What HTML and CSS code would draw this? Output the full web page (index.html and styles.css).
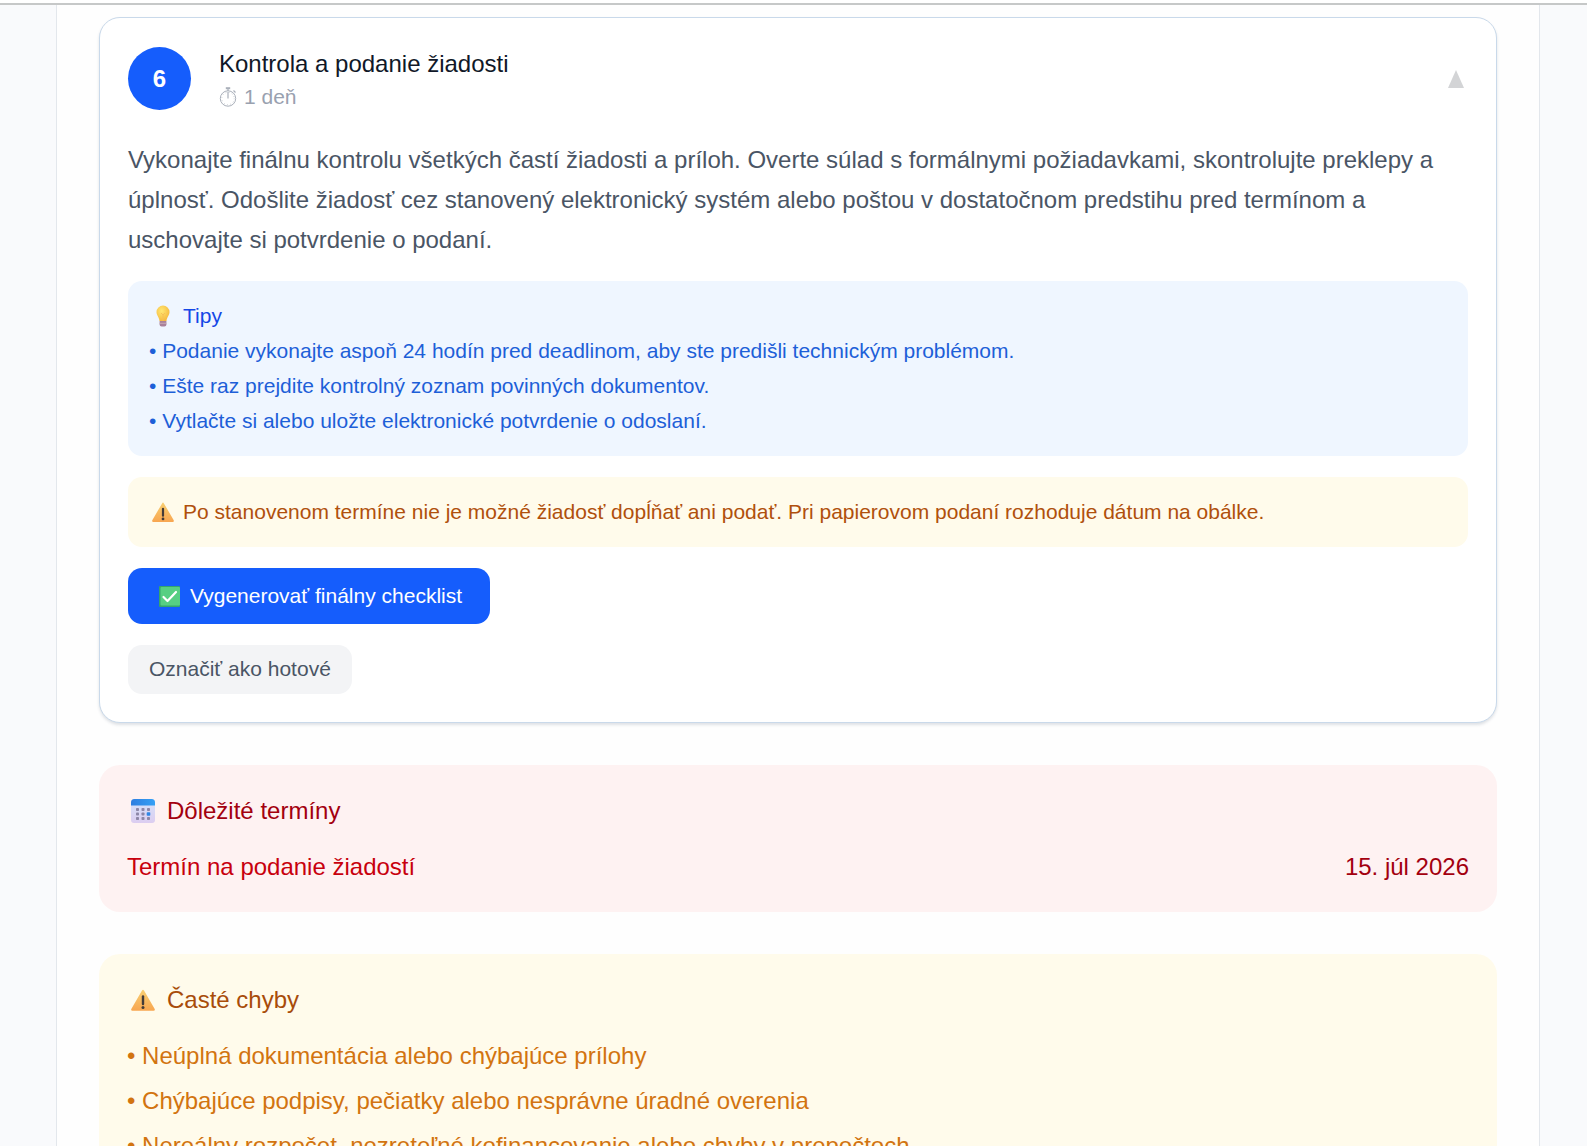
FILE: index.html
```html
<!DOCTYPE html>
<html lang="sk">
<head>
<meta charset="utf-8">
<meta name="viewport" content="width=device-width, initial-scale=1">
<title>Kontrola a podanie žiadosti</title>
<link rel="stylesheet" href="styles.css">
</head>
<body>
<svg class="defs" aria-hidden="true">
  <defs>
    <linearGradient id="amber" x1="0" y1="0" x2="0" y2="1"><stop offset="0" stop-color="#f8cf72"/><stop offset="1" stop-color="#f8a650"/></linearGradient>
    <radialGradient id="glow" cx=".4" cy=".35" r=".7"><stop offset="0" stop-color="#ffe873"/><stop offset="1" stop-color="#f5b63c"/></radialGradient>
    <linearGradient id="sky" x1="0" y1="0" x2="1" y2="0"><stop offset="0" stop-color="#2f7ee0"/><stop offset="1" stop-color="#35a0f5"/></linearGradient>
    <linearGradient id="paper" x1="0" y1="0" x2="0" y2="1"><stop offset="0" stop-color="#d5e4fb"/><stop offset="1" stop-color="#dccdf0"/></linearGradient>
    <symbol id="warning" viewBox="0 0 24 24">
      <path d="M11 2.6Q12 .8 13 2.600L23.700 21Q24.300 22.800 22.600 22.800H1.400Q-.3 22.800.3 21Z" fill="url(#amber)"/>
      <path d="M12 8.500V16" stroke="#433b38" stroke-width="2.400" stroke-linecap="round"/>
      <circle cx="12" cy="19.600" r="1.500" fill="#433b38"/>
    </symbol>
  </defs>
</svg>
<div class="topbar"></div>
<div class="scroller">
  <main class="page">
    <section class="step">
      <header class="step-head">
        <span class="badge">6</span>
        <div class="step-name">
          <h2>Kontrola a podanie žiadosti</h2>
          <p class="time">
            <svg class="clock" viewBox="0 0 18 20" fill="none" stroke="#aab0ba" aria-hidden="true">
              <circle cx="9" cy="11.500" r="7.700" stroke-width="1"/>
              <circle cx="9" cy="11.500" r="6.200" stroke-width=".8" stroke-dasharray=".7 2.550"/>
              <path d="M9 11.500V5M9 4V2M14.500 3.500l2 2" stroke-width="1.200"/>
              <path d="M6.800 1.200h4.400" stroke-width="2"/>
            </svg>
            1 deň
          </p>
        </div>
        <button class="toggle" type="button" aria-label="Zbaliť krok">
          <svg viewBox="0 0 16 18" aria-hidden="true"><path d="M8 0L16 18H0Z" fill="#d3d4d6"/></svg>
        </button>
      </header>
      <p class="lead">Vykonajte finálnu kontrolu všetkých častí žiadosti a príloh. Overte súlad s formálnymi požiadavkami, skontrolujte preklepy a úplnosť. Odošlite žiadosť cez stanovený elektronický systém alebo poštou v dostatočnom predstihu pred termínom a uschovajte si potvrdenie o podaní.</p>
      <div class="note tips">
        <h3 class="line">
          <span class="icon"><svg width="14" height="22" viewBox="0 0 14 22" aria-hidden="true">
            <path d="M7 .5a6.500 6.500 0 0 1 6.500 6.500c0 3.500-2.600 5-3 9h-7c-.4-4-3-5.500-3-9A6.500 6.500 0 0 1 7 .5Z" fill="url(#glow)"/>
            <path d="M5 8l2 2 2-2M7 10v6" fill="none" stroke="#f6c057" stroke-width="1"/>
            <path d="M3.600 16h6.800v3.500a2 2 0 0 1-2 2H5.600a2 2 0 0 1-2-2Z" fill="#a9829b"/>
            <path d="M3.600 18.300h6.800" stroke="#c8a9b4" stroke-width="1"/>
          </svg></span>Tipy</h3>
        <ul>
          <li>• Podanie vykonajte aspoň 24 hodín pred deadlinom, aby ste predišli technickým problémom.</li>
          <li>• Ešte raz prejdite kontrolný zoznam povinných dokumentov.</li>
          <li>• Vytlačte si alebo uložte elektronické potvrdenie o odoslaní.</li>
        </ul>
      </div>
      <p class="note warn line"><span class="icon"><svg width="22" height="22" aria-hidden="true"><use href="#warning"/></svg></span>Po stanovenom termíne nie je možné žiadosť dopĺňať ani podať. Pri papierovom podaní rozhoduje dátum na obálke.</p>
      <button class="btn primary" type="button">
        <span class="icon"><svg width="21" height="21" viewBox="0 0 21 21" aria-hidden="true">
          <rect width="21" height="21" rx="1" fill="#35a56c"/>
          <rect x="1.500" y="1" width="19.500" height="18.500" rx="1" fill="#56cf83"/>
          <path d="M4.500 11l4 4 8.500-9" fill="none" stroke="#fff" stroke-width="2.200" stroke-linecap="round" stroke-linejoin="round"/>
        </svg></span>Vygenerovať finálny checklist</button>
      <button class="btn quiet" type="button">Označiť ako hotové</button>
    </section>

    <section class="panel dates">
      <h2 class="line"><span class="icon"><svg width="24" height="24" viewBox="0 0 24 24" aria-hidden="true">
        <rect width="24" height="24" rx="3" fill="url(#paper)"/>
        <path d="M0 6.500V3.500A3.500 3.500 0 0 1 3.500 0h17A3.500 3.500 0 0 1 24 3.500v3Z" fill="url(#sky)"/>
        <g fill="#8d87a8"><rect x="5" y="9" width="3" height="3" rx=".8"/><rect x="10.500" y="9" width="3" height="3" rx=".8"/><rect x="16" y="9" width="3" height="3" rx=".8"/><rect x="5" y="13.500" width="3" height="3" rx=".8"/><rect x="10.500" y="13.500" width="3" height="3" rx=".8"/><rect x="5" y="18" width="3" height="3" rx=".8"/><rect x="10.500" y="18" width="3" height="3" rx=".8"/><rect x="16" y="18" width="3" height="3" rx=".8"/></g>
        <rect x="15.700" y="13.200" width="3.600" height="3.600" rx=".8" fill="#2f86e6"/>
      </svg></span>Dôležité termíny</h2>
      <div class="date-row"><span>Termín na podanie žiadostí</span><time datetime="2026-07-15">15. júl 2026</time></div>
    </section>

    <section class="panel mistakes">
      <h2 class="line"><span class="icon"><svg width="24" height="24" aria-hidden="true"><use href="#warning"/></svg></span>Časté chyby</h2>
      <ul>
        <li>• Neúplná dokumentácia alebo chýbajúce prílohy</li>
        <li>• Chýbajúce podpisy, pečiatky alebo nesprávne úradné overenia</li>
        <li>• Nereálny rozpočet, nezreteľné kofinancovanie alebo chyby v prepočtoch</li>
      </ul>
    </section>
  </main>
</div>
</body>
</html>
```
FILE: styles.css
```css
* { box-sizing: border-box; }
body {
  margin: 0;
  height: 100vh;
  display: flex;
  flex-direction: column;
  overflow: hidden;
  background: #f9fafc;
  color: #101828;
  font: 24px/35px "Liberation Sans", Arial, sans-serif;
}
h2, h3, p, ul { margin: 0; padding: 0; font-size: inherit; font-weight: 400; }
ul { list-style: none; }
button { font: inherit; border: 0; cursor: pointer; }
svg { display: block; }
.defs { position: absolute; width: 0; height: 0; }

.topbar { flex: none; height: 5px; background: #fff; border-bottom: 2px solid #c6c8c8; }
.scroller { flex: 1; min-height: 0; overflow-y: auto; scrollbar-width: none; padding: 0 47px 0 56px; }
.page {
  display: flex;
  flex-direction: column;
  gap: 42px;
  padding: 12px 42px 42px;
  background: #fefefe;
  border: solid #e3e7ec;
  border-width: 0 1px;
}

.step {
  display: flex;
  flex-direction: column;
  align-items: flex-start;
  gap: 21px;
  padding: 28px;
  background: #fff;
  border: 1px solid #c9d9ea;
  border-radius: 21px;
  box-shadow: 0 2px 3px rgba(40, 60, 90, .15);
}
.step-head { display: flex; align-items: center; gap: 28px; width: 100%; padding-bottom: 8px; }
.badge {
  flex: none;
  width: 63px;
  height: 63px;
  border-radius: 50%;
  background: #155dfc;
  color: #fff;
  font-weight: 700;
  line-height: 63px;
  text-align: center;
}
.step-name { flex: 1; display: flex; flex-direction: column; gap: 2px; }
.time { display: flex; align-items: center; gap: 7px; color: #99a1af; font-size: 21px; line-height: 28px; }
.clock { width: 18px; height: 20px; }
.toggle { padding: 4px; background: none; }
.toggle svg { width: 16px; height: 18px; }
.lead { color: #4a5565; line-height: 40px; }

.note { width: 100%; padding: 17px 21px 18px; border-radius: 14px; font-size: 21px; }
.line { display: flex; align-items: center; gap: 7px; }
.icon { flex: none; width: 27px; display: flex; justify-content: center; }
.tips { background: #eff6ff; color: #155dfc; }
.tips h3 { color: #1447e6; }
.tips ul { color: #1d5fd8; }
.warn { background: #fffbeb; color: #b0500c; }

.btn { border-radius: 14px; font-size: 21px; line-height: 28px; }
.primary { display: flex; align-items: center; gap: 7px; padding: 14px 28px; background: #155dfc; color: #fff; }
.quiet { padding: 10px 21px 11px; background: #f3f4f6; color: #4a5565; }

.panel { display: flex; flex-direction: column; gap: 21px; padding: 28px; border-radius: 21px; }
.panel .line { gap: 8px; }
.panel .icon { width: 32px; }
.dates { background: #fef2f2; color: #c8000d; }
.dates h2, .dates time { color: #a3000f; }
.date-row { display: flex; justify-content: space-between; }
.mistakes { background: #fffbeb; color: #d27410; }
.mistakes h2 { color: #a84c0a; }
.mistakes ul { display: flex; flex-direction: column; gap: 10px; }
```
